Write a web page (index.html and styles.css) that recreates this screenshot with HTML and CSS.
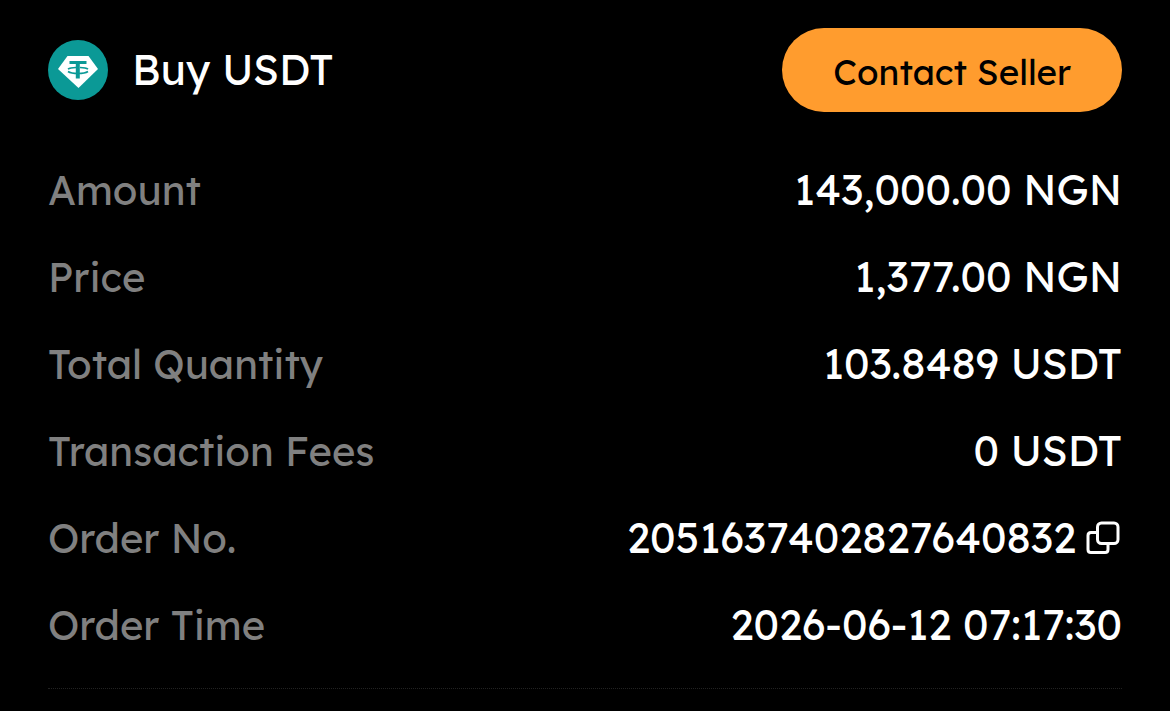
FILE: index.html
```html
<!DOCTYPE html>
<html lang="en">
<head>
<meta charset="utf-8">
<meta name="viewport" content="width=device-width, initial-scale=1">
<title>Buy USDT</title>
<link rel="stylesheet" href="styles.css">
</head>
<body>
<main class="order">
  <header class="order-header">
    <svg class="coin" viewBox="0 0 60 60" aria-hidden="true">
      <circle cx="30" cy="30" r="30" fill="#0b9996"/>
      <path d="M19.500 16H40.500L50 29L30.500 48L10 29Z" fill="#fff"/>
      <path d="M21.500 21H38.500V24H31.800V38.500H27.800V24H21.500Z" fill="#0b9996"/>
      <path d="M20 29.200Q22 27.700 28 27.500M32 27.500Q38 27.700 40 29.200M20 31.500Q23 33.500 30 33.500T40 31.500" fill="none" stroke="#0b9996" stroke-width="1.600"/>
    </svg>
    <h1 class="title">Buy USDT</h1>
    <button class="contact" type="button">Contact Seller</button>
  </header>
  <dl class="details">
    <div class="row"><dt>Amount</dt><dd>143,000.00 NGN</dd></div>
    <div class="row"><dt>Price</dt><dd>1,377.00 NGN</dd></div>
    <div class="row"><dt>Total Quantity</dt><dd>103.8489 USDT</dd></div>
    <div class="row"><dt>Transaction Fees</dt><dd>0 USDT</dd></div>
    <div class="row">
      <dt>Order No.</dt>
      <dd>2051637402827640832
        <button class="copy" type="button" aria-label="Copy order number">
          <svg viewBox="0 0 34 34" aria-hidden="true">
            <path d="M11 11.500H5Q2 11.500 2 14.500V28.500Q2 31.500 5 31.500H19Q22 31.500 22 28.500V22.500" fill="none" stroke="#fff" stroke-width="3"/>
            <rect x="11.500" y="2" width="20.500" height="20.500" rx="4" fill="none" stroke="#fff" stroke-width="3"/>
          </svg>
        </button>
      </dd>
    </div>
    <div class="row"><dt>Order Time</dt><dd>2026-06-12 07:17:30</dd></div>
  </dl>
  <hr class="divider">
</main>
</body>
</html>
```
FILE: styles.css
```css
* {
  box-sizing: border-box;
}

body {
  margin: 0;
  background: #000;
  color: #fff;
  font-family: Lexend, Inter, sans-serif;
}

.order {
  padding: 28px 48px 20px;
}

.order-header {
  display: flex;
  align-items: center;
}

.coin {
  width: 60px;
  height: 60px;
  margin-right: 24px;
}

.title {
  margin: 0;
  font-size: 42px;
  line-height: 48px;
  font-weight: 400;
}

.contact {
  margin-left: auto;
  padding: 22px 51px 18px;
  border: 0;
  border-radius: 42px;
  background: #ff9c2e;
  color: #000;
  font: inherit;
  font-size: 35px;
  line-height: 44px;
}

.details {
  display: grid;
  gap: 39px;
  margin: 54px 0 39px;
  font-size: 42px;
  line-height: 48px;
}

.row {
  display: flex;
  justify-content: space-between;
  align-items: center;
}

.row dt {
  color: #808080;
  font-size: 40px;
}

.row dd {
  display: flex;
  align-items: center;
  gap: 10px;
  margin: 0;
  font-weight: 450;
}

.copy {
  display: flex;
  margin-right: 2px;
  padding: 0;
  border: 0;
  background: none;
}

.copy svg {
  width: 34px;
  height: 34px;
}

.divider {
  margin: 0;
  border: 0;
  border-top: 1px dotted #222;
}
```
